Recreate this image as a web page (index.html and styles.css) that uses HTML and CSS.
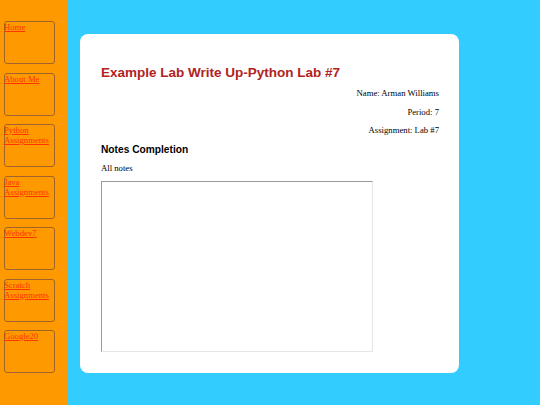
FILE: index.html
```html
<!DOCTYPE html>
<html>
<head>
<meta charset="utf-8">
<link rel="stylesheet" href="styles.css">
</head>
<body>
<nav class="sidebar">
  <div class="navbox"><a href="#">Home</a></div>
  <div class="navbox"><a href="#">About Me</a></div>
  <div class="navbox"><a href="#">Python Assignments</a></div>
  <div class="navbox"><a href="#">Java Assignments</a></div>
  <div class="navbox"><a href="#">Webdev7</a></div>
  <div class="navbox"><a href="#">Scratch Assignments</a></div>
  <div class="navbox"><a href="#">Google20</a></div>
</nav>
<main class="main">
  <section class="card">
    <h1 class="title">Example Lab Write Up-Python Lab #7</h1>
    <p class="meta">Name: Arman Williams</p>
    <p class="meta">Period: 7</p>
    <p class="meta last">Assignment: Lab #7</p>
    <h2 class="subtitle">Notes Completion</h2>
    <p class="label">All notes</p>
    <textarea class="notes"></textarea>
  </section>
</main>
</body>
</html>
```
FILE: styles.css
```css
html, body {
  margin: 0;
  padding: 0;
  height: 100%;
}
body {
  display: flex;
  background: #33ccff;
  font-family: "Liberation Serif", "Times New Roman", serif;
  overflow: hidden;
}
.sidebar {
  width: 68px;
  flex: none;
  background: #ff9900;
  padding-top: 21px;
  box-sizing: border-box;
  height: 405px;
}
.navbox {
  width: 51px;
  height: 43px;
  margin: 0 0 8.5px 4px;
  box-sizing: border-box;
  border: 1px solid #a0642a;
  border-radius: 3px;
  font-size: 8.7px;
  line-height: 10px;
}
.navbox a {
  color: #ff3300;
  text-decoration: underline;
  display: block;
  margin-left: -1px;
  margin-top: 0;
}
.main {
  flex: 1;
  padding: 34px 0 0 12px;
}
.card {
  width: 379px;
  height: 339px;
  box-sizing: border-box;
  background: #ffffff;
  border-radius: 8px;
  padding: 30px 20px 0 21px;
}
.title {
  font-family: "Liberation Sans", Arial, sans-serif;
  font-size: 13.5px;
  font-weight: bold;
  color: #b22222;
  margin: 0 0 7px 0;
  line-height: 17px;
}
.meta {
  text-align: right;
  font-size: 8.7px;
  line-height: 11px;
  margin: 0 0 7.5px 0;
  color: #000;
}
.meta.last {
  margin-bottom: 6.5px;
}
.subtitle {
  font-family: "Liberation Sans", Arial, sans-serif;
  font-size: 10.2px;
  font-weight: bold;
  margin: 0 0 7px 0;
  line-height: 13px;
  color: #000;
}
.label {
  font-size: 8.7px;
  line-height: 11px;
  margin: 0 0 7px 0;
  color: #000;
}
.notes {
  display: block;
  width: 272px;
  height: 171px;
  box-sizing: border-box;
  margin: 0;
  padding: 0;
  border-style: solid;
  border-width: 1px;
  border-color: #9a9a9a #e6e6e6 #e6e6e6 #9a9a9a;
  background: #fff;
  resize: none;
}
```
